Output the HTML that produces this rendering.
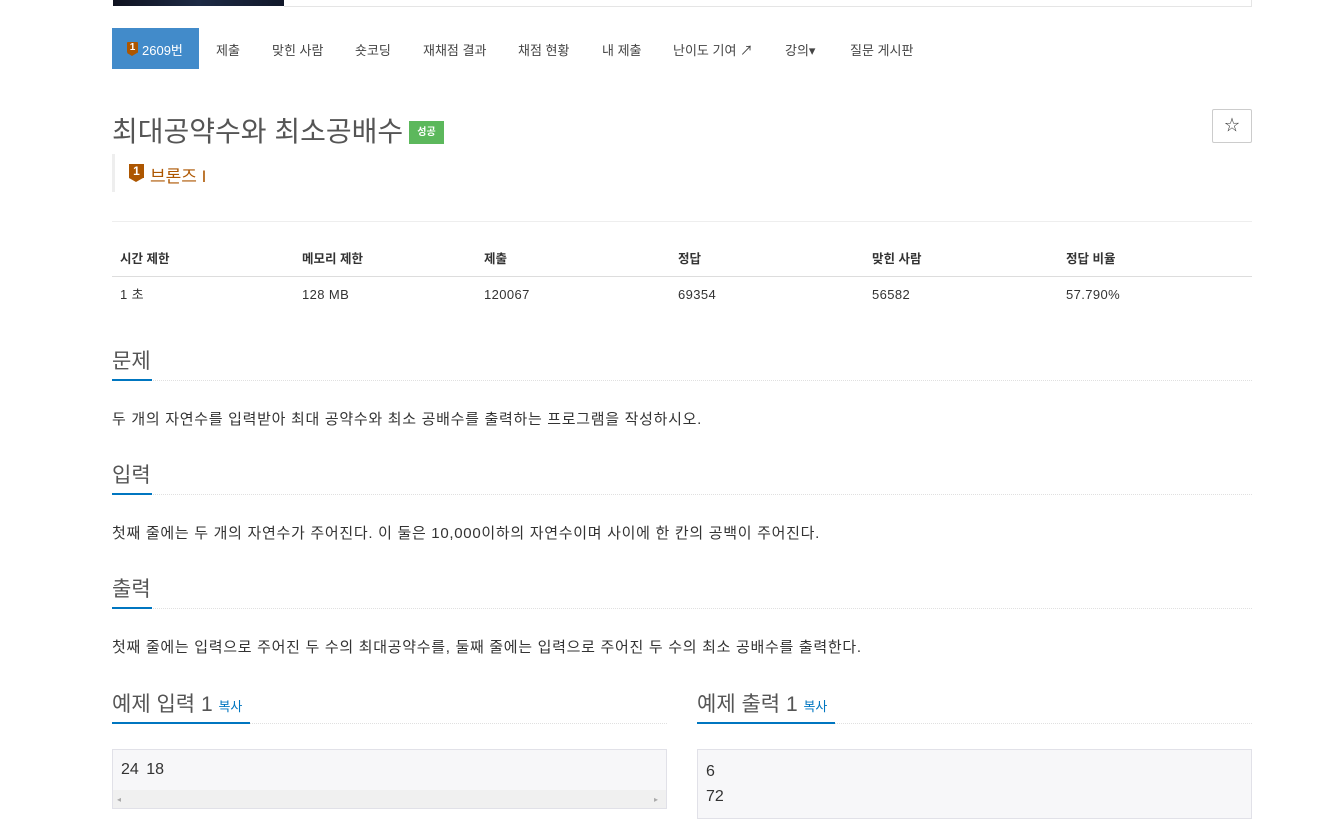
<!DOCTYPE html>
<html><head><meta charset="utf-8"><style>
*{margin:0;padding:0;box-sizing:border-box}
body{width:1321px;height:811px;overflow:hidden;background:#fff;font-family:"Liberation Sans","Noto Sans CJK KR",sans-serif;color:#333;font-size:13px;position:relative}
.a{position:absolute}
.nav span{position:absolute;top:40px;font-size:13px;color:#444}
h2{position:absolute;font-weight:normal;font-size:21px;color:#555}
.ul{position:absolute;height:1px;border-top:1px dotted #e0e0e0}
.bl{position:absolute;height:2px;background:#0076c0}
.th{position:absolute;top:250px;font-weight:bold;font-size:12.5px;color:#333;line-height:18px}
.td{position:absolute;top:286px;font-size:13px;color:#333;line-height:18px;letter-spacing:0.4px}
p{position:absolute;font-size:15px;letter-spacing:0.7px;color:#333;line-height:20px}
</style></head><body>
<div class="a" style="left:113px;top:0;width:171px;height:6px;background:linear-gradient(90deg,#0f1220,#1d2a44 50%,#11182a)"></div>
<div class="a" style="left:284px;top:6px;width:968px;height:1px;background:#e5e5e5"></div>
<div class="a" style="left:1251px;top:0;width:1px;height:7px;background:#e5e5e5"></div>
<div class="a" style="left:112px;top:28px;width:87px;height:41px;background:#428bca"></div>
<div class="a" style="left:127px;top:42px;width:11px;height:11px;background:#ad5600;border-radius:1px;color:#fff;font-size:10px;font-weight:bold;text-align:center;line-height:11px">1</div>
<div class="a" style="left:127px;top:53px;width:0;height:0;border-left:5.5px solid transparent;border-right:5.5px solid transparent;border-top:3px solid #ad5600"></div>
<div class="nav">
<span style="left:142px;color:#fff">2609번</span>
<span style="left:216px">제출</span>
<span style="left:272px">맞힌 사람</span>
<span style="left:355px">숏코딩</span>
<span style="left:423px">재채점 결과</span>
<span style="left:518px">채점 현황</span>
<span style="left:602px">내 제출</span>
<span style="left:673px">난이도 기여 ↗</span>
<span style="left:785px">강의▾</span>
<span style="left:850px">질문 게시판</span>
</div>
<div class="a" style="left:112px;top:110px;font-size:28px;color:#555">최대공약수와 최소공배수</div>
<div class="a" style="left:409px;top:121px;width:35px;height:23px;background:#5cb85c;color:#fff;font-size:10px;font-weight:bold;text-align:center;line-height:23px">성공</div>
<div class="a" style="left:1212px;top:109px;width:40px;height:34px;border:1px solid #ccc;border-radius:2px;text-align:center;line-height:32px;font-size:15px;color:#333">☆</div>
<div class="a" style="left:112px;top:154px;width:3px;height:38px;background:#eee"></div>
<div class="a" style="left:129px;top:164px;width:15px;height:14px;background:#ad5600;color:#fff;font-size:12px;font-weight:bold;text-align:center;line-height:14px">1</div>
<div class="a" style="left:129px;top:178px;width:0;height:0;border-left:7.5px solid transparent;border-right:7.5px solid transparent;border-top:4px solid #ad5600"></div>
<div class="a" style="left:150px;top:162px;font-size:17px;color:#ad5600">브론즈 I</div>
<div class="a" style="left:112px;top:221px;width:1140px;height:1px;background:#eee"></div>
<div class="th" style="left:120px">시간 제한</div><div class="th" style="left:302px">메모리 제한</div><div class="th" style="left:484px">제출</div><div class="th" style="left:678px">정답</div><div class="th" style="left:872px">맞힌 사람</div><div class="th" style="left:1066px">정답 비율</div>
<div class="a" style="left:112px;top:276px;width:1140px;height:1px;background:#ddd"></div>
<div class="td" style="left:120px">1 초</div><div class="td" style="left:302px">128 MB</div><div class="td" style="left:484px">120067</div><div class="td" style="left:678px">69354</div><div class="td" style="left:872px">56582</div><div class="td" style="left:1066px">57.790%</div>
<h2 style="left:112px;top:345px">문제</h2><div class="ul" style="left:112px;top:380px;width:1140px"></div><div class="bl" style="left:112px;top:379px;width:40px"></div>
<p style="left:112px;top:410px">두 개의 자연수를 입력받아 최대 공약수와 최소 공배수를 출력하는 프로그램을 작성하시오.</p>
<h2 style="left:112px;top:459px">입력</h2><div class="ul" style="left:112px;top:494px;width:1140px"></div><div class="bl" style="left:112px;top:493px;width:40px"></div>
<p style="left:112px;top:524px">첫째 줄에는 두 개의 자연수가 주어진다. 이 둘은 10,000이하의 자연수이며 사이에 한 칸의 공백이 주어진다.</p>
<h2 style="left:112px;top:573px">출력</h2><div class="ul" style="left:112px;top:608px;width:1140px"></div><div class="bl" style="left:112px;top:607px;width:40px"></div>
<p style="left:112px;top:638px">첫째 줄에는 입력으로 주어진 두 수의 최대공약수를, 둘째 줄에는 입력으로 주어진 두 수의 최소 공배수를 출력한다.</p>
<h2 style="left:112px;top:688px">예제 입력 1 <span style="font-size:13px;color:#0076c0">복사</span></h2><div class="ul" style="left:112px;top:723px;width:555px"></div><div class="bl" style="left:112px;top:722px;width:138px"></div>
<h2 style="left:697px;top:688px">예제 출력 1 <span style="font-size:13px;color:#0076c0">복사</span></h2><div class="ul" style="left:697px;top:723px;width:555px"></div><div class="bl" style="left:697px;top:722px;width:138px"></div>
<div class="a" style="left:112px;top:749px;width:555px;height:60px;background:#f7f7f9;border:1px solid #e1e1e8"></div>
<div class="a" style="left:113px;top:790px;width:553px;height:18px;background:#f0f0f0"></div>
<div class="a" style="left:117px;top:795px;font-size:8px;color:#aaa">◂</div><div class="a" style="left:654px;top:795px;font-size:8px;color:#aaa">▸</div>
<div class="a" style="left:121px;top:761px;font-family:'Liberation Sans',sans-serif;font-size:16px;color:#333;word-spacing:3px">24 18</div>
<div class="a" style="left:697px;top:749px;width:555px;height:70px;background:#f7f7f9;border:1px solid #e1e1e8"></div>
<div class="a" style="left:706px;top:759px;font-family:'Liberation Sans',sans-serif;font-size:16px;line-height:25px;color:#333">6<br>72</div>
</body></html>
